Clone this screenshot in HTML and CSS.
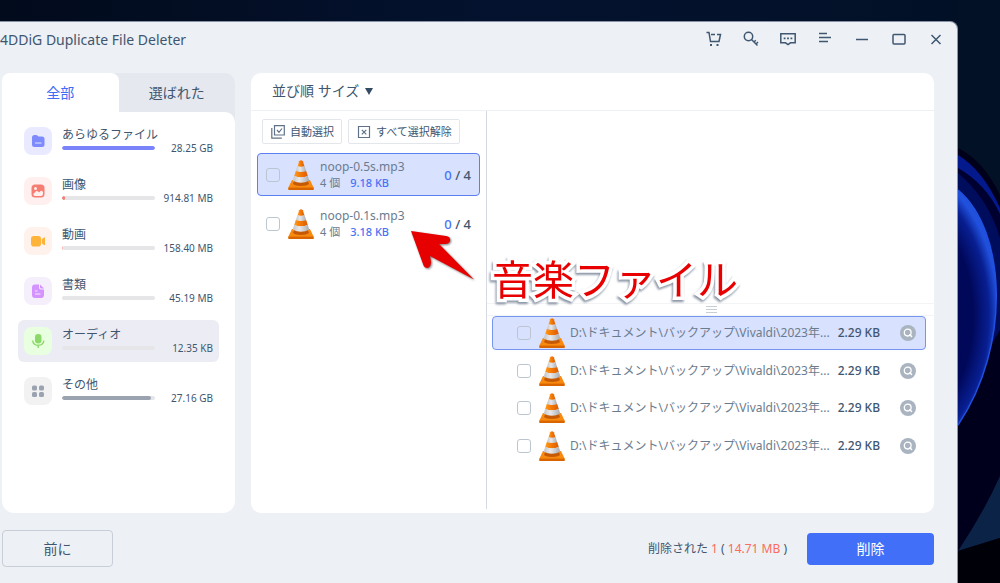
FILE: index.html
```html
<!DOCTYPE html>
<html lang="ja">
<head>
<meta charset="utf-8">
<meta name="viewport" content="width=device-width, initial-scale=1">
<title>4DDiG Duplicate File Deleter</title>
<link rel="stylesheet" href="styles.css">
</head>
<body>
<svg class="defs" aria-hidden="true">
  <defs>
    <linearGradient id="cone-body" x1="0" x2="1" y1="0" y2="0">
      <stop offset="0" stop-color="#ff9a1e"/><stop offset=".45" stop-color="#f47a06"/><stop offset="1" stop-color="#dc5a00"/>
    </linearGradient>
    <linearGradient id="cone-band" x1="0" x2="1" y1="0" y2="0">
      <stop offset="0" stop-color="#c4c4c6"/><stop offset=".4" stop-color="#e9e9eb"/><stop offset="1" stop-color="#a9abaf"/>
    </linearGradient>
    <symbol id="cone" viewBox="0 0 26 30">
      <path d="M4 20h18l3.600 7.400v2H.4v-2z" fill="#f98a10"/>
      <path d="M.4 27.600h25.200V30H.4z" fill="#d96500"/>
      <path d="M5 24l2-5h12l2 5c-2 2.600-14 2.600-16 0z" fill="#c65a04"/>
      <path d="M11.200 1.200Q13-.5 14.800 1.200L16.500 6.500Q13 8 9.500 6.500z" fill="url(#cone-body)"/>
      <path d="M9.500 6Q13 7.500 16.500 6L18.200 11.300Q13 13.500 7.800 11.300z" fill="url(#cone-band)"/>
      <path d="M7.800 11Q13 13.200 18.200 11L19.800 16Q13 19 6.200 16z" fill="url(#cone-body)"/>
      <path d="M6.200 15.700Q13 18.700 19.800 15.700L21.300 20.700Q13 25 4.700 20.700z" fill="url(#cone-band)"/>
    </symbol>
    <symbol id="inspect" viewBox="0 0 16 16">
      <circle cx="8" cy="8" r="8" fill="currentColor"/>
      <circle cx="7.700" cy="7.600" r="3.400" fill="none" stroke="#fff" stroke-width="1.300"/>
      <path d="M9.900 9.800l1.700 1.700" stroke="#fff" stroke-width="1.400" stroke-linecap="round"/>
    </symbol>
    <radialGradient id="bloom" gradientUnits="userSpaceOnUse" cx="-60" cy="315" r="100" gradientTransform="matrix(1 0 0 1.500 0 -157)">
      <stop offset="0" stop-color="#00054a"/><stop offset=".75" stop-color="#00085a"/><stop offset=".91" stop-color="#081f92"/><stop offset="1" stop-color="#2050dc"/>
    </radialGradient>
  </defs>
</svg>

<svg class="wallpaper" viewBox="0 0 42 583" preserveAspectRatio="none" aria-hidden="true">
  <path fill="#021126" d="M0 0h42v583H0z"/>
  <path fill="#00001a" d="M0 148Q25 160 42 195V583H0z"/>
  <path fill="#04198c" d="M0 155Q25 170 42 208V480L0 540z"/>
  <path fill="#000030" d="M0 168Q28 184 42 214V480L0 540z"/>
  <path fill="#000d5c" d="M0 173Q30 198 42 238V345Q34 400 0 430z"/>
  <path fill="#00001d" d="M0 400L42 330V583H0z"/>
  <path fill="url(#bloom)" d="M0 190C48 230 54 345 0 425z"/>
  <path fill="none" stroke="#1f50df" stroke-width="1.500" d="M0 190C48 230 54 345 0 425"/>
  <path fill="#0b2347" d="M42 476Q26 512 0 551L42 538z"/>
  <path fill="#000009" d="M0 551L42 538V583H0z"/>
</svg>

<div class="window">
  <header class="titlebar">
    <h1 class="title">4DDiG Duplicate File Deleter</h1>
    <nav class="tools" aria-label="ウィンドウ">
      <button class="tool" type="button" aria-label="購入"><svg viewBox="0 0 16 16"><path d="M.5 1.500H3L4.500 10.500H13L14.500 3.500H11M5 3.500h4"/><path class="solid" d="M4 13h2v2H4zM10.500 13h2v2h-2z"/></svg></button>
      <button class="tool" type="button" aria-label="登録"><svg viewBox="0 0 16 16"><circle cx="5.500" cy="5.500" r="4.200"/><path d="M8.500 8.500L14.500 14.500M11 11l1.800-1.800M13 13l2-2"/></svg></button>
      <button class="tool" type="button" aria-label="フィードバック"><svg viewBox="0 0 16 16"><path d="M.8 2.800h14.400v9H10.500L8 13.500 5.500 11.800H.8z"/><path class="solid" d="M3.700 6.500h1.800v1.800H3.700zM7.100 6.500h1.800v1.800H7.100zM10.500 6.500h1.800v1.800h-1.800z"/></svg></button>
      <button class="tool" type="button" aria-label="メニュー"><svg viewBox="0 0 16 16"><path d="M2 2.500h8M2 6.500h12M2 10.500h9"/></svg></button>
      <button class="tool" type="button" aria-label="最小化"><svg viewBox="0 0 16 16"><path d="M2 8.500h12"/></svg></button>
      <button class="tool" type="button" aria-label="最大化"><svg viewBox="0 0 16 16"><rect x="2" y="3.500" width="12" height="9.500" rx="1"/></svg></button>
      <button class="tool" type="button" aria-label="閉じる"><svg viewBox="0 0 16 16"><path d="M3.500 4l9 9M12.500 4l-9 9"/></svg></button>
    </nav>
  </header>

  <main class="main">
    <aside class="sidebar">
      <div class="tabs">
        <button class="tab tab-active" type="button">全部</button>
        <button class="tab" type="button">選ばれた</button>
      </div>
      <ul class="categories">
        <li class="category">
          <span class="badge badge-all"><svg viewBox="0 0 16 16"><path fill="#7d8bff" d="M2 4.500Q2 2 4.500 2H6.500L8.500 3.500H12Q14.500 3.500 14.500 6V11.500Q14.500 14 12 14H4.500Q2 14 2 11.500z"/><path stroke="#e5e7ff" d="M5 10h6.500"/></svg></span>
          <div class="usage"><span class="name">あらゆるファイル</span><span class="bar"><span class="fill fill-all" style="width:100%"></span></span></div>
          <span class="size">28.25 GB</span>
        </li>
        <li class="category">
          <span class="badge badge-image"><svg viewBox="0 0 16 16"><rect x="1.500" y="1.500" width="13" height="13" rx="3.500" fill="#f67d72"/><path fill="#ffefed" d="M3.300 11L6 8.300Q7 7.500 8 8.600L9 9.500 10.700 8Q11.700 7.300 13 9V11Q13 13 11 13H5Q3.300 13 3.300 11z"/><circle cx="5.500" cy="5.500" r="1.500" fill="#ffefed"/></svg></span>
          <div class="usage"><span class="name">画像</span><span class="bar"><span class="fill fill-image" style="width:3%"></span></span></div>
          <span class="size">914.81 MB</span>
        </li>
        <li class="category">
          <span class="badge badge-video"><svg viewBox="0 0 16 16"><rect x="1" y="3" width="10" height="10.500" rx="2.800" fill="#ffb338"/><path fill="#ffb338" d="M11.700 6.300L14 4.500Q15 4 15 5v6.500q0 1-1 .5L11.700 10.300z"/></svg></span>
          <div class="usage"><span class="name">動画</span><span class="bar"><span class="fill fill-video" style="width:1%"></span></span></div>
          <span class="size">158.40 MB</span>
        </li>
        <li class="category">
          <span class="badge badge-doc"><svg viewBox="0 0 16 16"><path fill="#d493ff" d="M2 4.500Q2 1.500 5 1.500H9V4.500Q9 6.500 11 6.500H14V12Q14 15 11 15H5Q2 15 2 12z"/><path fill="#d493ff" d="M10 1.500L14 5.500H11Q10 5.500 10 4.500z"/><path stroke="#f6eaff" d="M5 8h2.500M5 11h5.500"/></svg></span>
          <div class="usage"><span class="name">書類</span><span class="bar"></span></div>
          <span class="size">45.19 MB</span>
        </li>
        <li class="category category-active">
          <span class="badge badge-audio"><svg viewBox="0 0 16 16"><rect x="5" y="1" width="6.500" height="9.500" rx="3.200" fill="#8bd968"/><path fill="none" stroke="#8bd968" stroke-width="1.400" d="M2.700 7.500Q3 12.300 8.200 12.300T13.800 7.500M8.200 12.300V15"/></svg></span>
          <div class="usage"><span class="name">オーディオ</span><span class="bar"></span></div>
          <span class="size">12.35 KB</span>
        </li>
        <li class="category">
          <span class="badge badge-other"><svg viewBox="0 0 16 16"><g fill="#9aa3af"><rect x="2" y="2.500" width="5" height="5" rx="1.500"/><rect x="9" y="2.500" width="5" height="5" rx="1.500"/><rect x="2" y="9" width="5" height="5" rx="1.500"/><rect x="9" y="9" width="5" height="5" rx="1.500"/></g></svg></span>
          <div class="usage"><span class="name">その他</span><span class="bar"><span class="fill fill-other" style="width:96%"></span></span></div>
          <span class="size">27.16 GB</span>
        </li>
      </ul>
    </aside>

    <section class="panel">
      <div class="panel-head">
        <button class="sort" type="button">並び順 サイズ <svg viewBox="0 0 8 7" aria-hidden="true"><path d="M0 0h8L4 7z"/></svg></button>
      </div>
      <div class="panel-body">
        <div class="groups">
          <div class="actions">
            <button class="action" type="button"><svg viewBox="0 0 14 14"><path d="M3.500.7h9.800v9.300H3.500zM.8 3v10.200h10M6 5l2 2.300L11 3.500"/></svg>自動選択</button>
            <button class="action" type="button"><svg viewBox="0 0 14 14"><path d="M1.500 1.500h11v11h-11zM4.800 4.800l4.500 4.500M9.300 4.800L4.800 9.300"/></svg>すべて選択解除</button>
          </div>
          <ul class="group-list">
            <li class="group selected">
              <input class="check" type="checkbox" aria-label="noop-0.5s.mp3">
              <svg class="cone"><use href="#cone"/></svg>
              <div class="group-text"><span class="group-name">noop-0.5s.mp3</span><span class="group-meta"><span>4 個</span><span class="kb">9.18 KB</span></span></div>
              <span class="count"><span class="blue">0</span> / 4</span>
            </li>
            <li class="group">
              <input class="check" type="checkbox" aria-label="noop-0.1s.mp3">
              <svg class="cone"><use href="#cone"/></svg>
              <div class="group-text"><span class="group-name">noop-0.1s.mp3</span><span class="group-meta"><span>4 個</span><span class="kb">3.18 KB</span></span></div>
              <span class="count"><span class="blue">0</span> / 4</span>
            </li>
          </ul>
        </div>
        <div class="details">
          <div class="preview"></div>
          <div class="splitter"><span class="grip"></span></div>
          <ul class="files">
            <li class="file selected">
              <input class="check" type="checkbox" aria-label="ファイル 1"><svg class="cone"><use href="#cone"/></svg>
              <span class="path">D:\ドキュメント\バックアップ\Vivaldi\2023年...</span><span class="file-size">2.29 KB</span>
              <button class="inspect" type="button" aria-label="プレビュー"><svg><use href="#inspect"/></svg></button>
            </li>
            <li class="file">
              <input class="check" type="checkbox" aria-label="ファイル 2"><svg class="cone"><use href="#cone"/></svg>
              <span class="path">D:\ドキュメント\バックアップ\Vivaldi\2023年...</span><span class="file-size">2.29 KB</span>
              <button class="inspect" type="button" aria-label="プレビュー"><svg><use href="#inspect"/></svg></button>
            </li>
            <li class="file">
              <input class="check" type="checkbox" aria-label="ファイル 3"><svg class="cone"><use href="#cone"/></svg>
              <span class="path">D:\ドキュメント\バックアップ\Vivaldi\2023年...</span><span class="file-size">2.29 KB</span>
              <button class="inspect" type="button" aria-label="プレビュー"><svg><use href="#inspect"/></svg></button>
            </li>
            <li class="file">
              <input class="check" type="checkbox" aria-label="ファイル 4"><svg class="cone"><use href="#cone"/></svg>
              <span class="path">D:\ドキュメント\バックアップ\Vivaldi\2023年...</span><span class="file-size">2.29 KB</span>
              <button class="inspect" type="button" aria-label="プレビュー"><svg><use href="#inspect"/></svg></button>
            </li>
          </ul>
        </div>
      </div>
      <svg class="arrow" viewBox="0 0 68 54" aria-hidden="true"><path d="M2 2L37 7Q42 8 41 12 40 15 36 15L30 15 65 50.500 21 27 22 33Q22 38 18.500 39 15 39 14 35z"/></svg>
      <span class="callout">音楽ファイル</span>
    </section>
  </main>

  <footer class="footer">
    <button class="back" type="button">前に</button>
    <p class="summary">削除された <span class="red">1</span> ( <span class="red">14.71 MB</span> )</p>
    <button class="delete" type="button">削除</button>
  </footer>
</div>
</body>
</html>
```

FILE: styles.css
```css
* { box-sizing: border-box; }

body {
  margin: 0;
  min-height: 100vh;
  padding: 21px 42px 0 0;
  display: flex;
  background: linear-gradient(90deg, #020b1c, #04122f 50%, #021026);
  color: #40566f;
  font: 12px/16px "Noto Sans", "Noto Sans CJK JP", sans-serif;
}

ul { list-style: none; margin: 0; padding: 0; }
button { font: inherit; color: inherit; margin: 0; padding: 0; border: 0; background: none; }
svg { display: block; }

.defs { position: absolute; width: 0; height: 0; }

.wallpaper {
  position: absolute;
  top: 0;
  right: 0;
  width: 50px;
  height: 100%;
  padding-left: 8px;
}

.window {
  position: relative;
  flex: 1;
  min-width: 0;
  display: flex;
  flex-direction: column;
  background: #edf0f5;
  border-top: 1px solid #8793a5;
  border-right: 1px solid #8b98aa;
  border-top-right-radius: 8px;
}

.titlebar {
  display: flex;
  justify-content: space-between;
  height: 51px;
  padding-right: 13px;
}

.title { margin: 8px 0 0; font-size: 14px; line-height: 20px; font-weight: 400; }
.tools { display: flex; gap: 21px; padding-top: 9px; }
.tool { width: 16px; height: 16px; }
.tool svg { width: 16px; height: 16px; fill: none; stroke: #3f5771; stroke-width: 1.5; }
.tool .solid { fill: #3f5771; stroke: none; }

.main {
  flex: 1;
  display: grid;
  grid-template-columns: 233px minmax(0, 1fr);
  gap: 16px;
  padding: 0 23px 0 2px;
}

.sidebar { display: flex; flex-direction: column; background: #e5e8ef; border-radius: 10px 10px 12px 12px; }
.tabs { display: grid; grid-template-columns: 1fr 1fr; height: 39px; }
.tab { font-size: 14px; border-radius: 8px 8px 0 0; }
.tab-active { background: #fff; color: #3f6bf5; }

.categories {
  flex: 1;
  display: flex;
  flex-direction: column;
  gap: 8px;
  padding: 8px 16px;
  background: #fff;
  border-radius: 0 10px 12px 12px;
}

.category {
  display: grid;
  grid-template-columns: 28px 93px 1fr;
  gap: 10px;
  height: 42px;
  padding: 7px 6px 0;
  border-radius: 6px;
}
.category-active { background: #ecedf4; }

.badge { width: 28px; height: 28px; padding: 6px; border-radius: 8px; }
.badge svg { width: 16px; height: 16px; }
.badge-all { background: #e9eaff; }
.badge-image { background: #fff0ef; }
.badge-video { background: #fff1ec; }
.badge-doc { background: #f5effc; }
.badge-audio { background: #e8ffe0; }
.badge-other { background: #f2f2f3; }

.usage { display: flex; flex-direction: column; gap: 3px; }
.name { white-space: nowrap; }
.bar { height: 4px; border-radius: 2px; background: #e6e6e8; overflow: hidden; }
.fill { display: block; height: 4px; border-radius: 2px; }
.fill-all { background: #7b83fb; }
.fill-image { background: #f67d72; }
.fill-video { background: #ffb3a0; }
.fill-other { background: #9aa3af; }
.size { padding-top: 13px; font-size: 10px; text-align: right; white-space: nowrap; margin-left: -10px; }

.panel {
  position: relative;
  display: flex;
  flex-direction: column;
  background: #fff;
  border-radius: 10px;
}
.panel-head { height: 38px; padding: 8px 21px; border-bottom: 1px solid #edf0f4; }
.sort { display: flex; align-items: center; gap: 6px; font-size: 14px; line-height: 20px; }
.sort svg { width: 8px; height: 7px; fill: #344b66; }

.panel-body {
  flex: 1;
  display: grid;
  grid-template-columns: 236px minmax(0, 1fr);
  padding-bottom: 4px;
}
.groups { padding: 8px 6px; border-right: 1px solid #d5dae2; }
.actions { display: flex; gap: 6px; padding-left: 5px; }
.action {
  display: flex;
  align-items: center;
  gap: 5px;
  height: 25px;
  padding: 0 7px 0 8px;
  border: 1px solid #e3e7ec;
  border-radius: 2px;
  font-size: 11px;
}
.action svg { width: 14px; height: 14px; fill: none; stroke: #5f7287; stroke-width: 1.2; }

.group-list { display: flex; flex-direction: column; gap: 6px; padding-top: 9px; }
.group {
  display: flex;
  align-items: center;
  height: 43px;
  padding: 0 8px;
  border: 1px solid transparent;
  border-radius: 4px;
}
.selected { background: #d8e1fe; border-color: #5b7ff0; }

.check {
  appearance: none;
  flex: none;
  width: 14px;
  height: 14px;
  margin: 0 8px 0 0;
  border: 1px solid #bdc6d0;
  border-radius: 3px;
}
.cone { flex: none; width: 26px; height: 30px; }
.group-text { flex: 1; padding-left: 6px; color: #6b7c8e; }
.group-name { display: block; line-height: 16px; }
.group-meta { display: flex; gap: 10px; font-size: 11px; line-height: 15px; }
.kb, .blue { color: #4a72f5; font-weight: 500; }
.count { font-size: 13px; font-weight: 500; }

.details { display: grid; grid-template-rows: 192fr 13px 193fr; }
.splitter {
  display: flex;
  align-items: center;
  justify-content: center;
  border: solid #f3f4f6;
  border-width: 1px 0;
}
.grip { width: 11px; height: 7px; border: solid #c9ced5; border-width: 1px 0; background: linear-gradient(#c9ced5, #c9ced5) center / 100% 1px no-repeat; }

.files {
  display: flex;
  flex-direction: column;
  justify-content: space-between;
  height: 147px;
  padding: 0 9px 0 5px;
}
.file {
  display: flex;
  align-items: center;
  height: 34px;
  padding: 0 9px 0 24px;
  border: 1px solid transparent;
  border-radius: 4px;
}
.files .selected { border-color: #7595ef; }
.path { flex: 1; min-width: 0; padding-left: 5px; overflow: hidden; white-space: nowrap; color: #6b7c8e; }
.file-size { padding-left: 8px; font-weight: 500; white-space: nowrap; }
.inspect { width: 16px; height: 16px; margin-left: 20px; color: #a9b4c0; }
.inspect svg { width: 16px; height: 16px; }

.arrow { position: absolute; left: 158px; top: 156px; width: 68px; height: 54px; fill: #e60000; filter: drop-shadow(1px 1px 1px #777); }
.callout {
  position: absolute;
  left: 241px;
  top: 178px;
  font-size: 41px;
  line-height: 56px;
  white-space: nowrap;
  color: #e80000;
  -webkit-text-stroke: 7px #fff;
  paint-order: stroke fill;
  filter: drop-shadow(-1px 2px 1px #8792a2);
}

.footer {
  display: flex;
  align-items: center;
  height: 70px;
  padding: 1px 23px 0 2px;
}
.back { width: 111px; height: 37px; border: 1px solid #c8ced8; border-radius: 4px; font-size: 14px; }
.summary { margin: 0 20px 0 auto; }
.red { color: #fb6c5c; }
.delete { width: 127px; height: 32px; border-radius: 4px; background: #416ff8; color: #fff; font-size: 14px; }
```
